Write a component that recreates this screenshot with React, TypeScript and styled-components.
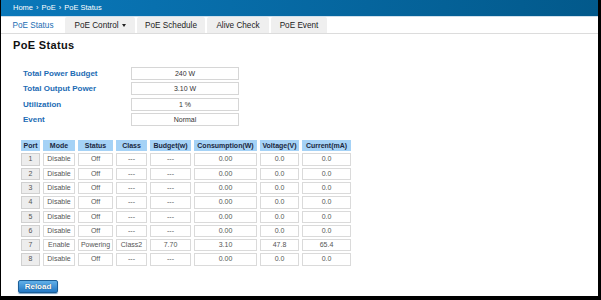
import styled, { createGlobalStyle } from 'styled-components';

const GlobalStyle = createGlobalStyle`
  html, body {
    margin: 0;
    padding: 0;
    background: #fff;
  }
  body {
    font-family: "Liberation Sans", Arial, sans-serif;
  }
`;

const Frame = styled.div`
  width: 601px;
  height: 300px;
  box-sizing: border-box;
  border-left: 1px solid #000;
  border-right: 3px solid #000;
  border-bottom: 4px solid #000;
  background: #fff;
  overflow: hidden;
`;

const Breadcrumb = styled.div`
  height: 16px;
  line-height: 16px;
  padding-left: 12px;
  font-size: 7.5px;
  color: #fff;
  background: linear-gradient(to right, #0a78ba, #02598b);
  border-bottom: 1px solid #cfe0ec;
`;

const Sep = styled.span`
  margin: 0 3px;
`;

const TabBar = styled.div`
  display: flex;
  gap: 2px;
  height: 16px;
  padding-left: 2px;
  border-bottom: 1px solid #dcdcdc;
`;

const Tab = styled.div<{ $active?: boolean; $w: number }>`
  width: ${(p) => p.$w}px;
  display: flex;
  align-items: center;
  justify-content: center;
  font-size: 8.2px;
  color: ${(p) => (p.$active ? '#1a6db3' : '#222')};
  background: ${(p) => (p.$active ? '#fff' : '#efefef')};
  border-top-left-radius: 2px;
  border-top-right-radius: 2px;
`;

const Caret = styled.span`
  display: inline-block;
  margin-left: 3px;
  border-left: 2.5px solid transparent;
  border-right: 2.5px solid transparent;
  border-top: 3px solid #222;
`;

const Content = styled.div`
  padding: 0 0 0 12px;
`;

const Title = styled.h2`
  margin: 5px 0 0;
  font-size: 11px;
  line-height: 13px;
  font-weight: bold;
  letter-spacing: 0.35px;
  color: #111;
`;

const InfoGrid = styled.div`
  display: grid;
  grid-template-columns: 108px 108px;
  row-gap: 2.3px;
  margin: 15px 0 0 10px;
`;

const InfoLabel = styled.div`
  font-size: 8px;
  font-weight: bold;
  color: #1d6cb4;
  line-height: 13px;
`;

const InfoValue = styled.div`
  height: 13px;
  box-sizing: border-box;
  border: 1px solid #d6d6d6;
  font-size: 7px;
  line-height: 11px;
  text-align: center;
  color: #333;
`;

const Table = styled.table`
  border-collapse: separate;
  border-spacing: 3px 2.5px;
  margin: 12px 0 0 5px;
  font-size: 7px;
  table-layout: fixed;
`;

const Th = styled.th<{ $w: number }>`
  width: ${(p) => p.$w}px;
  height: 11.5px;
  padding: 0;
  background: #a5d2f6;
  color: #1b2840;
  font-weight: bold;
  text-align: center;
  line-height: 11px;
  white-space: nowrap;
`;

const Td = styled.td<{ $port?: boolean }>`
  height: 12px;
  padding: 0;
  box-sizing: border-box;
  border: 1px solid ${(p) => (p.$port ? '#d0d0d0' : '#dadada')};
  background: ${(p) => (p.$port ? '#ededed' : '#fff')};
  color: #555;
  text-align: center;
  line-height: 10.3px;
`;

const ReloadButton = styled.button`
  display: block;
  margin: 12px 0 0 5px;
  width: 40px;
  height: 13px;
  padding: 0;
  border: 1px solid #1c5f98;
  border-radius: 2px;
  background: linear-gradient(#62b0e8, #2378c4);
  color: #fff;
  font-family: "Liberation Sans", Arial, sans-serif;
  font-size: 8px;
  font-weight: bold;
  text-shadow: 0 0 1px #0b3c66;
  box-shadow: 0 1px 1px #7aa6cc;
`;

const tabs = [
  { label: 'PoE Status', w: 60, active: true },
  { label: 'PoE Control', w: 70, caret: true },
  { label: 'PoE Schedule', w: 68 },
  { label: 'Alive Check', w: 62 },
  { label: 'PoE Event', w: 56 },
];

const info = [
  ['Total Power Budget', '240 W'],
  ['Total Output Power', '3.10 W'],
  ['Utilization', '1 %'],
  ['Event', 'Normal'],
];

const columns: [string, number][] = [
  ['Port', 19],
  ['Mode', 32],
  ['Status', 35],
  ['Class', 31],
  ['Budget(w)', 41],
  ['Consumption(W)', 63],
  ['Voltage(V)', 39],
  ['Current(mA)', 49],
];

const off = ['Disable', 'Off', '---', '---', '0.00', '0.0', '0.0'];
const ports = [1, 2, 3, 4, 5, 6, 7, 8].map((n) =>
  n === 7
    ? [String(n), 'Enable', 'Powering', 'Class2', '7.70', '3.10', '47.8', '65.4']
    : [String(n), ...off],
);

const App = () => (
  <>
    <GlobalStyle />
    <Frame>
      <Breadcrumb>
        Home<Sep>›</Sep>PoE<Sep>›</Sep>PoE Status
      </Breadcrumb>
      <TabBar>
        {tabs.map((t) => (
          <Tab key={t.label} $w={t.w} $active={t.active}>
            {t.label}
            {t.caret && <Caret />}
          </Tab>
        ))}
      </TabBar>
      <Content>
        <Title>PoE Status</Title>
        <InfoGrid>
          {info.map(([label, value]) => [
            <InfoLabel key={label}>{label}</InfoLabel>,
            <InfoValue key={label + '-v'}>{value}</InfoValue>,
          ])}
        </InfoGrid>
        <Table>
          <thead>
            <tr>
              {columns.map(([name, w]) => (
                <Th key={name} $w={w}>
                  {name}
                </Th>
              ))}
            </tr>
          </thead>
          <tbody>
            {ports.map((row) => (
              <tr key={row[0]}>
                {row.map((cell, i) => (
                  <Td key={i} $port={i === 0}>
                    {cell}
                  </Td>
                ))}
              </tr>
            ))}
          </tbody>
        </Table>
        <ReloadButton>Reload</ReloadButton>
      </Content>
    </Frame>
  </>
);

export default App;
